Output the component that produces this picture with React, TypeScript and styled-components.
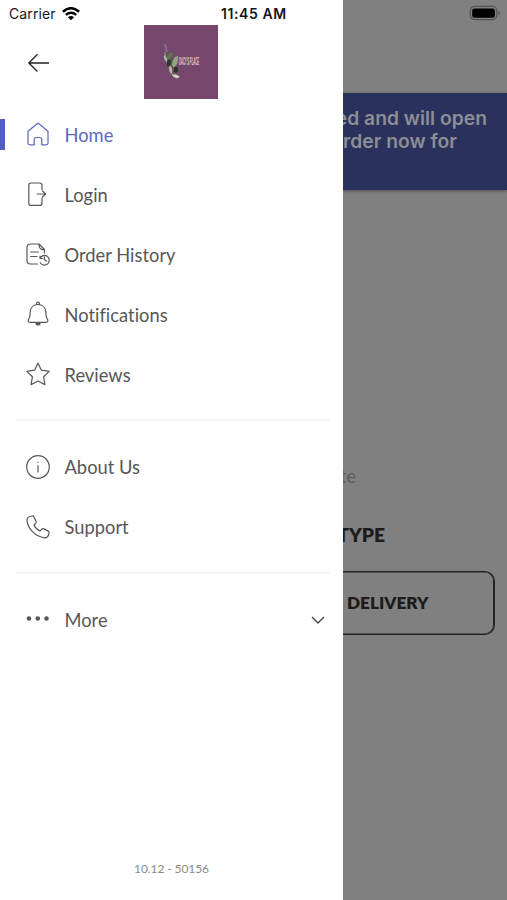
import React from "react";
import styled, { createGlobalStyle } from "styled-components";

const GlobalStyle = createGlobalStyle`
  * { box-sizing: border-box; }
  body { margin: 0; background: #fff; }
`;

const Screen = styled.div`
  display: flex;
  width: 507px;
  height: 900px;
  overflow: hidden;
  font-family: Lato, sans-serif;
`;

const Drawer = styled.aside`
  display: flex;
  flex-direction: column;
  flex: none;
  width: 343px;
  height: 100%;
  background: #fff;
`;

const StatusBar = styled.div`
  display: flex;
  align-items: center;
  height: 25px;
  padding: 2px 0 0 9px;
  font-family: Inter, sans-serif;
  color: #161616;
`;

const Carrier = styled.span`
  width: 53px;
  font-size: 14px;
  letter-spacing: 0.1px;
  white-space: nowrap;
`;

const Clock = styled.span`
  margin-left: 141px;
  font-size: 14px;
  font-weight: 600;
  letter-spacing: 0.6px;
  white-space: nowrap;
`;

const Header = styled.header`
  display: flex;
  align-items: center;
  height: 74px;
  padding-left: 27px;
`;

const Logo = styled.div`
  width: 74px;
  height: 74px;
  margin-left: 94px;
  display: flex;
  align-items: center;
  padding-left: 19px;
  background: #75476d;
`;

const LogoName = styled.span`
  width: 20px;
  font: 700 10px/10px "Liberation Sans", sans-serif;
  color: #dccbd9;
  white-space: nowrap;
  transform: translateX(-2px) scaleX(0.27);
  transform-origin: left center;
`;

const Menu = styled.nav`
  display: flex;
  flex-direction: column;
  padding-top: 5.5px;
`;

const Item = styled.a<{ $active?: boolean }>`
  display: flex;
  align-items: center;
  height: 60px;
  color: ${(p) => (p.$active ? "#5b68be" : "#575757")};
  font-size: 18.3px;
`;

const Marker = styled.span<{ $active?: boolean }>`
  width: 5px;
  height: 31px;
  margin-right: 20px;
  background: ${(p) => (p.$active ? "#5060bc" : "transparent")};
`;

const Icon = styled.svg`
  flex: none;
  width: 26px;
  height: 26px;
  margin: 0 13.5px 1px 0;
  fill: none;
  stroke: currentColor;
  stroke-width: 1.2;
  stroke-linecap: round;
  stroke-linejoin: round;
  overflow: visible;
`;

const Label = styled.span`
  flex: 1;
  line-height: 22px;
  letter-spacing: 0.03px;
  white-space: nowrap;
`;

const Chevron = styled.svg`
  width: 14px;
  height: 8px;
  margin-right: 18px;
  fill: none;
  stroke: #444;
  stroke-width: 1.4;
`;

const Divider = styled.hr`
  width: 314px;
  height: 2px;
  margin: 14.5px 0 16px 16px;
  border: 0;
  background: #f5f5f5;
`;

const Version = styled.footer`
  margin-top: auto;
  padding-bottom: 23px;
  text-align: center;
  font-size: 12px;
  letter-spacing: -0.1px;
  line-height: 16px;
  color: #8b8b8b;
`;

const Backdrop = styled.main`
  flex: none;
  width: 164px;
  height: 100%;
  overflow: hidden;
  background: #808080;
`;

const BackdropTop = styled.div`
  display: flex;
  justify-content: flex-end;
  height: 93px;
  padding: 5px 6px 0 0;
`;

const Banner = styled.section`
  display: flex;
  flex-direction: column;
  align-items: flex-end;
  height: 97px;
  padding-top: 14px;
  background: #2b315d;
  box-shadow: 0 1px 3px rgba(0, 0, 0, 0.4);
  color: #8c8e96;
  font: 600 19.3px/23px Inter, sans-serif;
`;

const BannerLine = styled.span<{ $inset: number }>`
  margin-right: ${(p) => p.$inset}px;
  white-space: nowrap;
`;

const Hint = styled.p`
  display: flex;
  justify-content: flex-end;
  margin: 274px 151px 0 0;
  font-size: 18.5px;
  line-height: 24px;
  color: #5d5d5d;
`;

const Heading = styled.h2`
  display: flex;
  justify-content: flex-end;
  margin: 35px 122px 0 0;
  font-size: 19.2px;
  font-weight: 800;
  line-height: 24px;
  white-space: nowrap;
  color: #1c1c1c;
`;

const Delivery = styled.button`
  display: flex;
  align-items: center;
  width: 152px;
  height: 64px;
  margin: 24px 0 0;
  padding: 0 0 0 4px;
  border: 1px solid #242424;
  border-left: 0;
  border-radius: 0 10px 10px 0;
  box-shadow: inset -0.5px 0 0 0.5px #242424;
  background: transparent;
  color: #1c1c1c;
  font: 800 17.2px/20px Lato, sans-serif;
`;

const icons = {
  home: <path d="M3 10.2 13 2l10 8.2V22q0 1.8-1.8 1.8h-4.4V18.5q0-2-2-2h-3.6q-2 0-2 2v5.3H4.8Q3 23.8 3 22Z" />,
  login: <path d="M17 8.5V4.2q0-2.2-2.2-2.2H6Q3.8 2 3.8 4.2v18Q3.8 24.4 6 24.4h8.8q2.2 0 2.2-2.2v-5M12 13h8.5M17.5 10l3.2 3-3.2 3" />,
  history: (
    <>
      <path d="M12.5 23H5.5Q2 23 2 19.5v-13Q2 3 5.5 3H14l5.5 5.5v3.5M14 3q0 6.5 5.5 5.5M5.5 11h8M5.5 15.5h6.5" />
      <path d="M15 17.5a4.8 4.8 0 1 1 .3 4.2M15 17.5v-2.3M15 17.5h2.3M19.3 15.8v2.8l2 1.5" />
    </>
  ),
  bell: (
    <>
      <path d="M11.5 3.5V2.5q0-1.4 1.5-1.4t1.5 1.4v1M13 3.5C8.5 3.5 5.5 6.5 5.2 11L4.9 14.8C4.7 17 3.6 17.5 3.2 19.2c-.2 1.4.6 2.2 2 2.2h15.6c1.4 0 2.2-.8 2-2.2-.4-1.7-1.5-2.2-1.7-4.4L20.8 11C20.5 6.5 17.5 3.5 13 3.5Z" />
      <path d="M10.3 22h5.4c-.2 1.8-1.1 2.6-2.7 2.6s-2.5-.8-2.7-2.6Z" fill="currentColor" stroke="none" />
    </>
  ),
  star: <path d="M13 2.2 16.4 9.2 24.2 10.4 18.6 15.8 19.9 23.6 13 20 6.1 23.6 7.4 15.8 1.8 10.4 9.6 9.2Z" />,
  info: (
    <>
      <circle cx="13" cy="13" r="11.3" />
      <path d="M13 11.5v6.5M13 8v.3" />
    </>
  ),
  phone: <path d="M5 2.5 7 2c.9-.2 1.5.2 1.9 1L11 7.2c.4.9.3 1.6-.4 2.3L9 11c1.2 2.8 3.2 4.8 6 6l1.6-1.7c.7-.7 1.4-.8 2.3-.4l4.1 2c.9.4 1.2 1 1 1.9l-.5 2c-.6 2.2-2 3.2-4.2 3C10.5 22.5 3 15 2 6.6c-.2-2.2.8-3.5 3-4.1Z" />,
  dots: (
    <g fill="currentColor" stroke="none">
      <circle cx="4" cy="12.5" r="2.3" />
      <circle cx="12.8" cy="12.5" r="2.3" />
      <circle cx="21.5" cy="12.5" r="2.3" />
    </g>
  ),
};

type ItemProps = { icon: keyof typeof icons; label: string; active?: boolean; expandable?: boolean };

function MenuItem({ icon, label, active, expandable }: ItemProps) {
  return (
    <Item $active={active}>
      <Marker $active={active} />
      <Icon viewBox="0 0 26 26">{icons[icon]}</Icon>
      <Label>{label}</Label>
      {expandable && (
        <Chevron viewBox="0 0 14 8">
          <path d="M1 1l6 6 6-6" />
        </Chevron>
      )}
    </Item>
  );
}

function WifiIcon() {
  return (
    <svg width="18" height="14" viewBox="0 0 18 14" fill="none" stroke="#000" strokeWidth="2.5">
      <path d="M.9 4.7q8.1-7 16.2 0M3.8 7.9q5.2-4.3 10.4 0" />
      <path d="M5.9 10.3q3.1-2.5 6.2 0L9 13.3Z" fill="#000" stroke="none" />
    </svg>
  );
}

function BackArrow() {
  return (
    <svg width="23" height="20" viewBox="0 0 23 20" fill="none" stroke="#222" strokeWidth="1.3">
      <path d="M22 11H2M10.5 2.2 1.8 11l8.7 8.5" />
    </svg>
  );
}

function Branch() {
  return (
    <svg width="18" height="38" viewBox="0 0 18 38" fill="none">
      <path d="M2 9Q2 16 4 20T8 29t6 6" stroke="#8fa58c" strokeWidth="1" />
      <path d="M2 1Q4.5 3 4 9Q1 6 2 1Z" stroke="#8b8199" strokeWidth=".8" />
      <path d="M1 12Q0 17 4 19Q5 14 1 12Z" fill="#a9b5aa" />
      <path d="M4 15Q5 9 10 10Q10 14 5 18Z" fill="#587a48" />
      <path d="M4 18Q8 14 8 19Q8 23 5 24Q3 22 4 18Z" fill="#26392e" />
      <path d="M9 22Q10 13 15 13Q16 20 11 25Z" fill="#8cab70" />
      <path d="M7 22Q5 28 8 31Q11 28 7 22Z" fill="#b0c09d" />
      <path d="M11 24Q15 22 15 28Q14 31 11 29Z" fill="#25362c" />
      <path d="M9 32Q13 30 17 34Q12 37 9 32Z" fill="#d2d3bc" />
    </svg>
  );
}

function Battery() {
  return (
    <svg width="32" height="16" viewBox="0 0 32 16">
      <rect x="1.3" y="1.4" width="26.5" height="13.2" rx="4" fill="none" stroke="#525252" strokeWidth="1.2" />
      <rect x="3.2" y="3.4" width="22.7" height="9.4" rx="2.3" fill="#000" />
      <path d="M29.3 5.8q3 2.2 0 4.5Z" fill="#525252" />
    </svg>
  );
}

export default function App() {
  return (
    <>
      <GlobalStyle />
      <Screen>
        <Drawer>
          <StatusBar>
            <Carrier>Carrier</Carrier>
            <WifiIcon />
            <Clock>11:45 AM</Clock>
          </StatusBar>
          <Header>
            <BackArrow />
            <Logo>
              <Branch />
              <LogoName>DACY'S PLACE</LogoName>
            </Logo>
          </Header>
          <Menu>
            <MenuItem icon="home" label="Home" active />
            <MenuItem icon="login" label="Login" />
            <MenuItem icon="history" label="Order History" />
            <MenuItem icon="bell" label="Notifications" />
            <MenuItem icon="star" label="Reviews" />
            <Divider />
            <MenuItem icon="info" label="About Us" />
            <MenuItem icon="phone" label="Support" />
            <Divider />
            <MenuItem icon="dots" label="More" expandable />
          </Menu>
          <Version>10.12 - 50156</Version>
        </Drawer>
        <Backdrop>
          <BackdropTop>
            <Battery />
          </BackdropTop>
          <Banner>
            <BannerLine $inset={20}>ed and will open</BannerLine>
            <BannerLine $inset={50}>rder now for</BannerLine>
          </Banner>
          <Hint>te</Hint>
          <Heading>TYPE</Heading>
          <Delivery>DELIVERY</Delivery>
        </Backdrop>
      </Screen>
    </>
  );
}
